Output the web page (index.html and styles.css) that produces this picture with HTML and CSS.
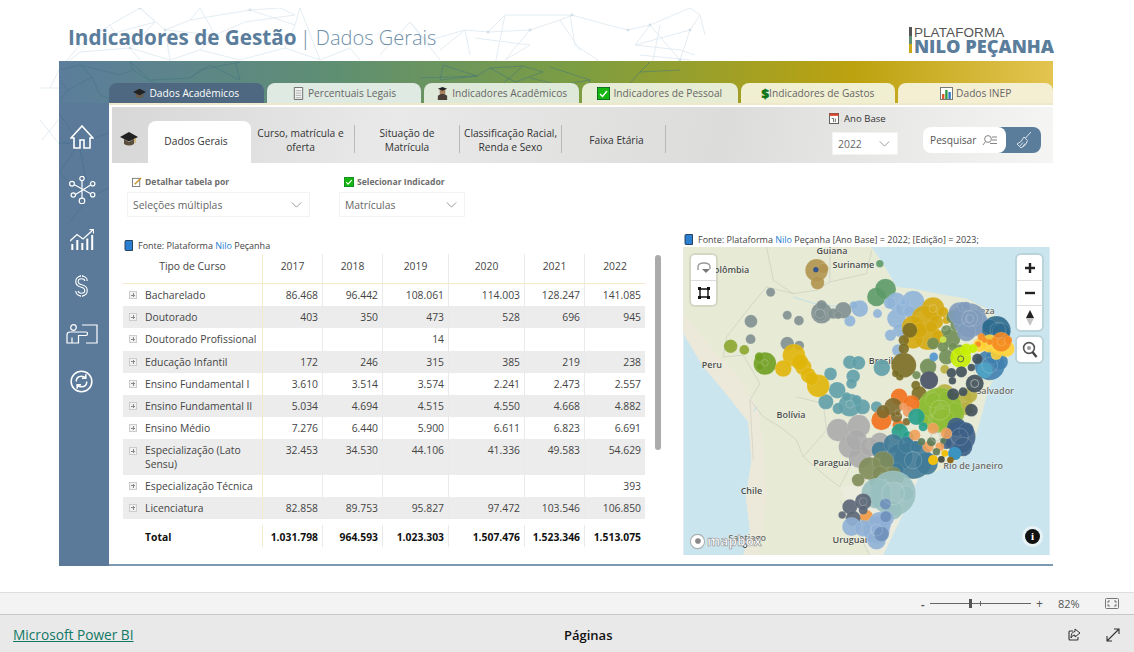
FILE: index.html
```html
<!DOCTYPE html>
<html lang="pt">
<head>
<meta charset="utf-8">
<title>Indicadores de Gestão</title>
<link rel="stylesheet" href="styles.css">
</head>
<body>
<div class="report">
  <svg class="netbg" viewBox="0 8 1134 200" width="1134" height="200">
    <path d="M110 25L140 8L155 22L115 33L110 25M140 8L165 30L190 20L200 8L215 35L165 30M190 20L250 10L280 8L295 15L245 22L215 35M250 10L295 25L300 8M80 45L60 68L80 52L130 48L170 60L200 50L240 60L285 48L320 60L350 48L360 60M130 48L140 60M60 68L50 88M40 88H60M40 120L60 145M42 140L60 118M155 22L130 48M215 35L200 50M165 30L170 60M295 25L285 48M110 25L80 45M300 8L320 60M430 40L465 30L488 32L530 30L560 20L572 15L608 25L628 30M488 32L505 15L570 15L575 45L598 60L590 75M505 15L495 65M440 50L465 30L470 55M475 38L530 45L505 60M430 45L410 22L380 55M410 22L440 60M560 20L580 50M660 25L650 75L680 60L690 30L700 15L690 8L650 25L635 45L680 50L695 55M650 25L680 60M628 30L650 25M635 45L690 30M700 15L705 35M640 55L690 60M530 30L505 60" fill="none" stroke="#e4edf3" stroke-width="1"/>
    <g fill="#d3e0e9"><circle cx="140" cy="8" r="1.4"/><circle cx="165" cy="30" r="1.4"/><circle cx="250" cy="10" r="1.4"/><circle cx="130" cy="48" r="1.4"/><circle cx="488" cy="32" r="1.4"/><circle cx="530" cy="30" r="1.4"/><circle cx="572" cy="15" r="1.4"/><circle cx="650" cy="25" r="1.4"/><circle cx="690" cy="30" r="1.4"/><circle cx="680" cy="60" r="1.4"/><circle cx="628" cy="30" r="1.4"/></g>
  </svg>
  <header class="head">
    <h1 class="title"><b>Indicadores de Gestão</b><span class="pipe">|</span><span class="sub">Dados Gerais</span></h1>
    <div class="logo">
      <div class="logobar"><i class="lb1"></i><i class="lb2"></i><i class="lb3"></i></div>
      <div class="logotext"><div class="lt1">PLATAFORMA</div><div class="lt2">NILO PEÇANHA</div></div>
    </div>
  </header>
  <main class="panel">
    <svg class="netpanel" viewBox="59 61 994 60" width="994" height="60">
      <path d="M59 80L68 90L92 77L80 65L60 70M92 77L100 95L120 103M80 65L120 75L133 70L130 61L150 80L190 78L200 70L240 62M133 70L165 90M190 78L210 65L240 80L235 61M443 65L477 76L440 80L443 65M477 76L420 78M477 76L490 68L523 66L543 72L515 82L490 68M523 66L490 95M550 67L590 80L585 103M590 80L560 85L530 78M650 62L640 72L680 70M640 72L630 83M60 100L68 90" fill="none" stroke="#41737f" stroke-opacity=".5" stroke-width="1"/>
    </svg>
    <nav class="tabs">
      <div class="tab tab1"><svg class="ic" viewBox="0 0 14 12"><path d="M3 6V9.5Q7 12 11 9.5V6L7 8Z" fill="#6b5a45"/><path d="M7 1L14 4.5L7 8L0 4.5Z" fill="#222"/></svg>Dados Acadêmicos</div>
      <div class="tab tab2"><svg class="ic" viewBox="0 0 12 14"><path d="M1.5.5H10.5V13.5H1.5Z" fill="#f4f4f4" stroke="#666"/><path d="M3 4H9M3 6.5H9M3 9H9M3 11.5H9" stroke="#aaa"/></svg>Percentuais Legais</div>
      <div class="tab tab3"><svg class="ic" viewBox="0 0 12 14"><rect x="3" y="2" width="6" height="5.5" fill="#a87e5e"/><path d="M1 2L6 0L11 2L6 4Z" fill="#222"/><path d="M1 14V9.5L4 7.5H8L11 9.5V14Z" fill="#4b4038"/></svg>Indicadores Acadêmicos</div>
      <div class="tab tab4"><svg class="ic ic-box" viewBox="0 0 13 13"><rect width="13" height="13" fill="#15b60f" stroke="#114" stroke-width=".8"/><path d="M3 7L5.5 9.5L10 4" fill="none" stroke="#fff" stroke-width="1.4"/></svg>Indicadores de Pessoal</div>
      <div class="tab tab5"><span class="dollar">$</span>Indicadores de Gastos</div>
      <div class="tab tab6"><svg class="ic ic-box" viewBox="0 0 13 13"><rect x=".5" y=".5" width="12" height="12" fill="#fff" stroke="#777"/><rect x="2" y="7" width="2.4" height="5" fill="#e2572b"/><rect x="5.2" y="3" width="2.4" height="9" fill="#2d9b44"/><rect x="8.4" y="5" width="2.4" height="7" fill="#2f78c8"/></svg>Dados INEP</div>
    </nav>
    <div class="body">
      <aside class="rail">
        <svg class="railnet" viewBox="0 0 50 120" width="50" height="120"><path d="M0 10L20 40L50 30M20 40L0 70L30 95L50 85M30 95L10 120M20 40L30 95M0 40L20 40" fill="none" stroke="#4f7392" stroke-width="1"/></svg>
        <svg class="rl rl-home" viewBox="0 0 24 24" width="24" height="24"><path d="M1 13L12 1L23 13H20V23H14V15H10V23H4V13Z"/></svg>
        <svg class="rl rl-net" viewBox="0 0 28 28" width="28" height="28"><circle cx="14" cy="2.5" r="2.2"/><circle cx="4" cy="7.7" r="2.4"/><circle cx="24.7" cy="7.7" r="2.2"/><circle cx="5.3" cy="19" r="2.2"/><circle cx="24.7" cy="18.7" r="2.2"/><circle cx="14" cy="25" r="2.8"/><path d="M14 5V22M6.4 8.7L22.7 17.7M7.5 18.5L22.6 9"/></svg>
        <svg class="rl rl-chart" viewBox="0 0 24 21" width="24" height="21"><path d="M0 12L7 5.5L13 10L23.5 .5M19.5 .5H23.5V4.5"/><path class="bar" d="M2.3 21V15M7.3 21V11M12.3 21V14M17.3 21V9.5M22.2 21V6"/></svg>
        <svg class="rl rl-dollar" viewBox="0 0 13 26" width="13" height="26"><path class="s-o" d="M6.5 2V4.5M6.5 21.5V24M11 8Q11 4.5 6.5 4.5Q2 4.5 2 8.5Q2 12 6.5 13Q11 14 11 17.5Q11 21.5 6.5 21.5Q2 21.5 2 18"/><path class="s-i" d="M6.5 2V4.5M6.5 21.5V24M11 8Q11 4.5 6.5 4.5Q2 4.5 2 8.5Q2 12 6.5 13Q11 14 11 17.5Q11 21.5 6.5 21.5Q2 21.5 2 18"/></svg>
        <svg class="rl rl-teach" viewBox="0 0 32 20" width="32" height="20"><circle cx="7.5" cy="3.5" r="2.8"/><path d="M1 19V11Q1 8 4 8H20Q21.5 8 21.5 9.5Q21.5 11.5 20 11.5H12.5V19ZM6 13.5V19M16 1H31V19H20"/></svg>
        <svg class="rl rl-cycle" viewBox="0 0 24 24" width="23" height="23"><circle cx="12" cy="12" r="10.8"/><path class="th" d="M6.5 12Q6.5 6.5 12 6.5Q14.5 6.5 16 8M16.5 4.5V8.5H12.5M17.5 12Q17.5 17.5 12 17.5Q9.5 17.5 8 16M7.5 19.5V15.5H11.5"/></svg>
      </aside>
      <section class="content">
        <div class="subbar">
          <svg class="capbig" viewBox="0 0 18 16" width="18" height="16"><path d="M4 8V13Q9 16 14 13V8L9 11Z" fill="#5c4f3e"/><path d="M9 1L18 6L9 10.5L0 6Z" fill="#222"/><path d="M15 7V12" stroke="#c79a2e"/></svg>
          <div class="st st-active">Dados Gerais</div>
          <div class="st st2">Curso, matrícula e<br>oferta</div>
          <div class="st st3">Situação de<br>Matrícula</div>
          <div class="st st4">Classificação Racial,<br>Renda e Sexo</div>
          <div class="st st5">Faixa Etária</div>
          <div class="yearbox">
            <div class="yearlabel"><svg class="ic-cal" viewBox="0 0 11 12"><rect x=".5" y=".5" width="10" height="11" fill="#fff" stroke="#555"/><rect x=".5" y=".5" width="10" height="2.6" fill="#d9452b"/><path d="M3 6H5V10M7 6V10" fill="none" stroke="#444" stroke-width=".8"/></svg>Ano Base</div>
            <div class="dd dd-year"><span>2022</span><svg class="chev" viewBox="0 0 12 7"><path d="M.5 .5L6 6L11.5 .5"/></svg></div>
          </div>
          <div class="search">
            <div class="search-l">Pesquisar<svg class="srch" viewBox="0 0 16 12" width="16" height="12"><circle cx="6" cy="5" r="3.4"/><path d="M3.5 7.5L1 11M10 3H15M10 6H15M8 9.5H15"/></svg></div>
            <div class="search-r"><svg class="broom" viewBox="0 0 16 18" width="16" height="18"><path d="M15 1L9.5 7M8 6L11.5 9.5Q11 14 5 17L1 13Q5 12 8 6ZM4 15L7 11.5M6.5 16L9 12.5"/></svg></div>
          </div>
        </div>
        <div class="filters">
          <div class="filter f1">
            <div class="flabel"><svg class="fic" viewBox="0 0 11 11"><rect x=".5" y="1.5" width="8" height="9" fill="#fff" stroke="#777"/><path d="M3 8L10 1" stroke="#c9962c" stroke-width="1.6"/></svg>Detalhar tabela por</div>
            <div class="dd dd-a"><span>Seleções múltiplas</span><svg class="chev" viewBox="0 0 12 7"><path d="M.5 .5L6 6L11.5 .5"/></svg></div>
          </div>
          <div class="filter f2">
            <div class="flabel"><svg class="fic" viewBox="0 0 11 11"><rect width="11" height="11" fill="#15b60f" stroke="#145" stroke-width=".6"/><path d="M2.5 5.5L4.5 7.8L8.5 3.5" fill="none" stroke="#fff" stroke-width="1.2"/></svg>Selecionar Indicador</div>
            <div class="dd dd-b"><span>Matrículas</span><svg class="chev" viewBox="0 0 12 7"><path d="M.5 .5L6 6L11.5 .5"/></svg></div>
          </div>
        </div>
        <div class="data">
          <div class="left">
            <div class="cap cap-l"><svg class="book" viewBox="0 0 9 11"><path d="M1 1.5Q1 .5 2 .5H8.5V10.5H2Q1 10.5 1 9.5Z" fill="#2b7fd0" stroke="#1d3550" stroke-width=".9"/></svg><span>Fonte: Plataforma <span class="nilo">Nilo</span> Peçanha</span></div>
            <div class="tablewrap">
              <div class="tbl">
                <div class="r rh"><div class="c c0 hc">Tipo de Curso</div><div class="c hc">2017</div><div class="c hc">2018</div><div class="c hc">2019</div><div class="c hc">2020</div><div class="c hc">2021</div><div class="c hc">2022</div></div>
                <div class="r"><div class="c c0"><i class="px"></i>Bacharelado</div><div class="c">86.468</div><div class="c">96.442</div><div class="c">108.061</div><div class="c">114.003</div><div class="c">128.247</div><div class="c">141.085</div></div>
                <div class="r z"><div class="c c0"><i class="px"></i>Doutorado</div><div class="c">403</div><div class="c">350</div><div class="c">473</div><div class="c">528</div><div class="c">696</div><div class="c">945</div></div>
                <div class="r"><div class="c c0"><i class="px"></i>Doutorado Profissional</div><div class="c"></div><div class="c"></div><div class="c">14</div><div class="c"></div><div class="c"></div><div class="c"></div></div>
                <div class="r z"><div class="c c0"><i class="px"></i>Educação Infantil</div><div class="c">172</div><div class="c">246</div><div class="c">315</div><div class="c">385</div><div class="c">219</div><div class="c">238</div></div>
                <div class="r"><div class="c c0"><i class="px"></i>Ensino Fundamental I</div><div class="c">3.610</div><div class="c">3.514</div><div class="c">3.574</div><div class="c">2.241</div><div class="c">2.473</div><div class="c">2.557</div></div>
                <div class="r z"><div class="c c0"><i class="px"></i>Ensino Fundamental II</div><div class="c">5.034</div><div class="c">4.694</div><div class="c">4.515</div><div class="c">4.550</div><div class="c">4.668</div><div class="c">4.882</div></div>
                <div class="r"><div class="c c0"><i class="px"></i>Ensino Médio</div><div class="c">7.276</div><div class="c">6.440</div><div class="c">5.900</div><div class="c">6.611</div><div class="c">6.823</div><div class="c">6.691</div></div>
                <div class="r z rtall"><div class="c c0"><i class="px"></i><span>Especialização (Lato<br>Sensu)</span></div><div class="c">32.453</div><div class="c">34.530</div><div class="c">44.106</div><div class="c">41.336</div><div class="c">49.583</div><div class="c">54.629</div></div>
                <div class="r"><div class="c c0"><i class="px"></i>Especialização Técnica</div><div class="c"></div><div class="c"></div><div class="c"></div><div class="c"></div><div class="c"></div><div class="c">393</div></div>
                <div class="r z"><div class="c c0"><i class="px"></i>Licenciatura</div><div class="c">82.858</div><div class="c">89.753</div><div class="c">95.827</div><div class="c">97.472</div><div class="c">103.546</div><div class="c">106.850</div></div>
                <div class="r rt"><div class="c c0 tot">Total</div><div class="c">1.031.798</div><div class="c">964.593</div><div class="c">1.023.303</div><div class="c">1.507.476</div><div class="c">1.523.346</div><div class="c">1.513.075</div></div>
              </div>
              <div class="scroll"></div>
            </div>
          </div>
          <div class="right">
            <div class="cap cap-r"><svg class="book" viewBox="0 0 9 11"><path d="M1 1.5Q1 .5 2 .5H8.5V10.5H2Q1 10.5 1 9.5Z" fill="#2b7fd0" stroke="#1d3550" stroke-width=".9"/></svg><span>Fonte: Plataforma <span class="nilo">Nilo</span> Peçanha [Ano Base] = 2022; [Edição] = 2023;</span></div>
            <div class="map">
              <svg class="mapsvg" viewBox="10 50 1100 925" width="367" height="308">
                <rect x="10" y="50" width="1100" height="925" fill="#cbe5ee"/>
                <path class="land" d="M10 50H575L610 100L650 170L700 175L770 190L860 205L930 240L990 300L995 370L950 430L925 480L905 560L885 630L850 680L790 715L715 745L695 790L680 830L640 900L610 945L570 975H190L210 900L198 800L215 690L205 575L130 480L70 410L10 310Z"/>
                <path class="andes" d="M10 310L70 410L130 480L205 575L215 690L198 800L210 900L190 975H235L260 800L250 650L235 540L170 430L100 360L50 300L10 250Z"/>
                <path class="south" d="M480 770L570 975H610L680 830L715 745L600 760Z"/>
                <path class="border" d="M260 50L280 150L340 190L260 170L210 230L140 320L130 380L190 375L240 460L210 510L250 560L300 590L350 630L370 680L440 740L480 770M440 600L430 520L350 500M370 680L440 600M480 770L520 690M520 880L570 975M480 810L520 880M210 510L220 690M340 190L410 180L450 155L560 130L575 60M450 60L450 155"/>
                <path class="river" d="M340 200L420 225L520 230M230 530L220 545"/>
                <g class="mlab"><text x="208" y="128" class="e">Colômbia</text><text x="410" y="70">Guiana</text><text x="458" y="112">Suriname</text><text x="65" y="413">Peru</text><text x="567" y="400">Brasil</text><text x="290" y="563">Bolívia</text><text x="400" y="708">Paraguai</text><text x="182" y="792">Chile</text><text x="458" y="940">Uruguai</text><text x="970" y="717" class="lt e">Rio de Janeiro</text><text x="1003" y="492" class="lt e">Salvador</text><text x="945" y="250" class="lt e">Fortaleza</text><text x="145" y="932" class="lt">Santiago</text></g>
                <circle cx="195" cy="947" r="6" fill="none" stroke="#333" stroke-width="2.5"/>
                <g class="dot" fill="#b0954f"><circle cx="410" cy="120" r="30"/><circle cx="413" cy="157" r="18"/><circle cx="430" cy="115" r="14"/></g>
                <circle cx="408" cy="118" r="8" fill="#35558c"/>
                <g class="dot" fill="#5c9a68"><circle cx="590" cy="200" r="25"/><circle cx="617" cy="177" r="28"/><circle cx="600" cy="100" r="10"/></g>
                <g class="dot" fill="#8fb4d8"><circle cx="700" cy="215" r="30"/><circle cx="650" cy="215" r="25"/><circle cx="630" cy="218" r="16"/><circle cx="650" cy="265" r="25"/><circle cx="660" cy="300" r="18"/><circle cx="632" cy="315" r="15"/><circle cx="655" cy="360" r="16"/><circle cx="540" cy="235" r="22"/><circle cx="522" cy="225" r="11"/><circle cx="510" cy="272" r="15"/><circle cx="593" cy="250" r="12"/><circle cx="670" cy="235" r="20"/><circle cx="690" cy="245" r="16"/><circle cx="672" cy="215" r="14"/></g>
                <g class="dot" fill="#7f9090"><circle cx="425" cy="248" r="28"/><circle cx="490" cy="240" r="22"/><circle cx="460" cy="250" r="14"/><circle cx="475" cy="255" r="10"/><circle cx="425" cy="225" r="14"/><circle cx="213" cy="273" r="17"/><circle cx="272" cy="186" r="12"/><circle cx="322" cy="255" r="12"/><circle cx="357" cy="271" r="13"/><circle cx="212" cy="327" r="13"/><circle cx="322" cy="340" r="18"/><circle cx="358" cy="346" r="13"/><circle cx="420" cy="255" r="16"/></g>
                <g class="dot" fill="#d4a90f"><circle cx="760" cy="235" r="30"/><circle cx="735" cy="265" r="35"/><circle cx="700" cy="290" r="30"/><circle cx="745" cy="320" r="35"/><circle cx="700" cy="325" r="27"/><circle cx="790" cy="245" r="14"/><circle cx="775" cy="320" r="18"/><circle cx="770" cy="275" r="18"/><circle cx="720" cy="300" r="20"/><circle cx="755" cy="290" r="16"/><circle cx="800" cy="270" r="10"/></g>
                <g class="dot" fill="#6f8d55"><circle cx="820" cy="260" r="18"/><circle cx="815" cy="325" r="24"/><circle cx="800" cy="380" r="20"/><circle cx="745" cy="410" r="22"/><circle cx="710" cy="435" r="11"/><circle cx="840" cy="360" r="15"/><circle cx="760" cy="340" r="16"/><circle cx="800" cy="300" r="14"/><circle cx="830" cy="285" r="16"/><circle cx="790" cy="350" r="14"/><circle cx="820" cy="350" r="12"/></g>
                <g class="dot" fill="#7f9bbb"><circle cx="870" cy="270" r="45"/><circle cx="840" cy="250" r="30"/><circle cx="890" cy="280" r="32"/><circle cx="860" cy="305" r="25"/><circle cx="885" cy="262" r="22"/><circle cx="850" cy="230" r="14"/><circle cx="860" cy="228" r="12"/></g>
                <g class="dot" fill="#2e6a8e"><circle cx="950" cy="300" r="38"/><circle cx="930" cy="290" r="20"/><circle cx="965" cy="305" r="24"/></g>
                <g class="dot" fill="#3f7fae"><circle cx="930" cy="405" r="40"/><circle cx="960" cy="395" r="22"/><circle cx="940" cy="380" r="20"/></g>
                <circle cx="915" cy="420" r="24" fill="#4ea3c4" fill-opacity=".9"/>
                <g class="dot" fill="#ffd233"><circle cx="930" cy="340" r="24"/><circle cx="980" cy="355" r="22"/><circle cx="900" cy="345" r="18"/><circle cx="950" cy="372" r="15"/><circle cx="960" cy="350" r="20"/></g>
                <g class="dot" fill="#f58a1f"><circle cx="965" cy="335" r="26"/><circle cx="905" cy="320" r="10"/><circle cx="985" cy="330" r="11"/><circle cx="895" cy="342" r="8"/><circle cx="930" cy="335" r="8"/><circle cx="915" cy="330" r="7"/></g>
                <g class="dot" fill="#c6ee00"><circle cx="843" cy="382" r="28"/><circle cx="860" cy="358" r="16"/><circle cx="880" cy="355" r="12"/></g>
                <circle cx="790" cy="328" r="10" fill="#c8e050"/><circle cx="843" cy="386" r="9" fill="none" stroke="#56664a" stroke-width="3"/><circle cx="762" cy="380" r="13" fill="#5d9dd0"/>
                <g class="dot" fill="#7a6d24"><circle cx="672" cy="405" r="33"/><circle cx="672" cy="330" r="14"/><circle cx="690" cy="300" r="20"/><circle cx="660" cy="440" r="10"/><circle cx="672" cy="355" r="14"/><circle cx="708" cy="465" r="12"/><circle cx="718" cy="490" r="20"/><circle cx="648" cy="430" r="10"/></g>
                <g class="dot" fill="#5fa0a8"><circle cx="510" cy="396" r="18"/><circle cx="536" cy="398" r="18"/><circle cx="606" cy="413" r="22"/><circle cx="452" cy="431" r="17"/><circle cx="520" cy="438" r="18"/><circle cx="515" cy="460" r="14"/><circle cx="472" cy="480" r="22"/><circle cx="438" cy="515" r="20"/><circle cx="510" cy="525" r="30"/><circle cx="548" cy="530" r="20"/><circle cx="590" cy="530" r="15"/><circle cx="475" cy="535" r="15"/><circle cx="500" cy="500" r="12"/><circle cx="530" cy="510" r="14"/></g>
                <g class="dot" fill="#8ba62e"><circle cx="152" cy="348" r="18"/><circle cx="193" cy="359" r="13"/></g>
                <g class="dot" fill="#6f9e20"><circle cx="255" cy="400" r="30"/><circle cx="238" cy="380" r="12"/><circle cx="240" cy="410" r="10"/></g>
                <g class="dot" fill="#e0b50a"><circle cx="342" cy="375" r="30"/><circle cx="310" cy="415" r="22"/><circle cx="370" cy="410" r="22"/><circle cx="385" cy="435" r="20"/><circle cx="360" cy="395" r="22"/><circle cx="415" cy="467" r="30"/><circle cx="395" cy="445" r="18"/></g>
                <circle cx="748" cy="450" r="27" fill="#555f6f"/>
                <g class="dot" fill="#b8b040"><circle cx="795" cy="417" r="12"/><circle cx="795" cy="490" r="25"/><circle cx="850" cy="510" r="25"/><circle cx="830" cy="520" r="15"/><circle cx="870" cy="495" r="20"/><circle cx="860" cy="535" r="18"/></g>
                <g class="dot" fill="#8ebc35"><circle cx="780" cy="540" r="60"/><circle cx="740" cy="530" r="25"/><circle cx="820" cy="550" r="30"/><circle cx="760" cy="510" r="20"/><circle cx="800" cy="505" r="20"/><circle cx="730" cy="570" r="15"/><circle cx="790" cy="570" r="30"/></g>
                <g class="dot" fill="#3f4f5a"><circle cx="893" cy="386" r="14"/><circle cx="815" cy="428" r="13"/><circle cx="845" cy="425" r="15"/><circle cx="875" cy="412" r="10"/><circle cx="818" cy="452" r="10"/><circle cx="820" cy="492" r="16"/><circle cx="875" cy="540" r="17"/><circle cx="850" cy="485" r="12"/><circle cx="885" cy="460" r="24"/></g>
                <circle cx="885" cy="460" r="12" fill="none" stroke="#ccc" stroke-width="2"/>
                <g class="dot" fill="#f2701c"><circle cx="658" cy="500" r="22"/><circle cx="605" cy="570" r="27"/><circle cx="695" cy="520" r="22"/><circle cx="655" cy="585" r="15"/></g>
                <g class="dot" fill="#7f6a2c"><circle cx="640" cy="530" r="24"/><circle cx="610" cy="545" r="18"/><circle cx="650" cy="560" r="15"/><circle cx="680" cy="575" r="10"/></g>
                <g class="dot" fill="#f09a60"><circle cx="685" cy="545" r="14"/><circle cx="670" cy="530" r="10"/></g>
                <g class="dot" fill="#23a08c"><circle cx="710" cy="560" r="22"/><circle cx="660" cy="605" r="22"/><circle cx="685" cy="620" r="15"/><circle cx="730" cy="590" r="12"/></g>
                <g class="dot" fill="#3d5f86"><circle cx="840" cy="620" r="42"/><circle cx="830" cy="590" r="25"/><circle cx="850" cy="650" r="25"/><circle cx="800" cy="640" r="15"/><circle cx="860" cy="600" r="20"/></g>
                <g class="dot" fill="#ababab"><circle cx="475" cy="600" r="30"/><circle cx="537" cy="588" r="30"/><circle cx="510" cy="650" r="30"/><circle cx="540" cy="680" r="30"/><circle cx="600" cy="635" r="25"/><circle cx="530" cy="630" r="28"/><circle cx="570" cy="650" r="25"/></g>
                <g class="dot" fill="#3f7a97"><circle cx="600" cy="660" r="22"/><circle cx="640" cy="640" r="25"/><circle cx="700" cy="690" r="50"/><circle cx="740" cy="700" r="30"/><circle cx="660" cy="680" r="35"/><circle cx="650" cy="720" r="20"/><circle cx="620" cy="690" r="18"/><circle cx="680" cy="645" r="22"/><circle cx="710" cy="650" r="16"/></g>
                <circle cx="825" cy="670" r="20" fill="#3b93c0"/>
                <g class="dot" fill="#f0a05a"><circle cx="705" cy="615" r="15"/><circle cx="760" cy="595" r="15"/><circle cx="800" cy="610" r="15"/><circle cx="745" cy="650" r="15"/><circle cx="780" cy="650" r="12"/></g>
                <g class="dot" fill="#5c7a55"><circle cx="725" cy="635" r="10"/><circle cx="755" cy="635" r="12"/><circle cx="790" cy="632" r="8"/><circle cx="770" cy="665" r="10"/></g>
                <circle cx="760" cy="690" r="15" fill="#f0c010"/><circle cx="795" cy="670" r="10" fill="#f0c010"/><circle cx="812" cy="690" r="10" fill="#8c6a1e"/><circle cx="785" cy="688" r="10" fill="#4d5346"/><circle cx="768" cy="620" r="14" fill="none" stroke="#bbb" stroke-width="2"/>
                <g class="dot" fill="#7f8c5a"><circle cx="570" cy="715" r="30"/><circle cx="610" cy="695" r="28"/><circle cx="640" cy="735" r="22"/><circle cx="535" cy="750" r="17"/><circle cx="585" cy="755" r="15"/><circle cx="660" cy="745" r="12"/><circle cx="600" cy="730" r="20"/></g>
                <g class="dot" fill="#98c0c0"><circle cx="640" cy="790" r="60"/><circle cx="590" cy="790" r="40"/><circle cx="680" cy="790" r="20"/><circle cx="640" cy="840" r="25"/></g>
                <circle cx="560" cy="860" r="20" fill="#f0a050"/>
                <g class="dot" fill="#5a6575"><circle cx="510" cy="830" r="20"/><circle cx="550" cy="815" r="22"/><circle cx="520" cy="865" r="20"/><circle cx="487" cy="855" r="10"/><circle cx="550" cy="840" r="12"/></g>
                <g class="dot" fill="#8fb0d5"><circle cx="590" cy="900" r="35"/><circle cx="515" cy="890" r="25"/><circle cx="620" cy="865" r="20"/><circle cx="590" cy="930" r="25"/><circle cx="600" cy="880" r="30"/><circle cx="550" cy="895" r="22"/></g>
                <g class="dot" fill="#6e90ba"><circle cx="618" cy="860" r="15"/><circle cx="617" cy="822" r="15"/><circle cx="605" cy="912" r="20"/></g>
                <g class="ring"><circle cx="760" cy="235" r="12"/><circle cx="870" cy="265" r="24"/><circle cx="870" cy="265" r="12"/><circle cx="670" cy="215" r="10"/><circle cx="955" cy="300" r="24"/><circle cx="965" cy="335" r="12"/><circle cx="930" cy="405" r="24"/><circle cx="510" cy="522" r="12"/><circle cx="255" cy="398" r="10"/><circle cx="655" cy="548" r="10"/><circle cx="840" cy="620" r="26"/><circle cx="700" cy="690" r="26"/><circle cx="640" cy="790" r="34"/><circle cx="420" cy="250" r="14"/><circle cx="780" cy="540" r="30"/><circle cx="550" cy="815" r="12"/><circle cx="590" cy="900" r="18"/><circle cx="795" cy="293" r="8"/></g>
              </svg>
              <div class="mgroup mg-l">
                <div class="mbtn"><svg viewBox="0 0 14 14" width="14" height="14"><path d="M1 9V6Q1 2 7 2Q13 2 13 6V8" fill="none" stroke="#999" stroke-width="1.4"/><path d="M5 8H13L9 12Z" fill="#777"/></svg></div>
                <div class="mbtn"><svg viewBox="0 0 12 12" width="12" height="12"><path d="M2 2H10V10H2Z" fill="none" stroke="#111" stroke-width="1.4"/><path d="M0 0H3V3H0ZM9 0H12V3H9ZM0 9H3V12H0ZM9 9H12V12H9Z" fill="#111"/></svg></div>
              </div>
              <div class="mgroup mg-r">
                <div class="mbtn"><svg viewBox="0 0 12 12" width="12" height="12"><path d="M6 1V11M1 6H11" stroke="#222" stroke-width="2.4"/></svg></div>
                <div class="mbtn"><svg viewBox="0 0 12 12" width="12" height="12"><path d="M1 6H11" stroke="#222" stroke-width="2.4"/></svg></div>
                <div class="mbtn"><svg viewBox="0 0 10 18" width="10" height="18"><path d="M5 1L9 9H1Z" fill="#222"/><path d="M5 17L9 9H1Z" fill="#c4c4c4"/></svg></div>
              </div>
              <div class="mgroup mg-s"><div class="mbtn"><svg viewBox="0 0 16 18" width="16" height="18"><circle cx="7" cy="7" r="5.4" fill="#fff" stroke="#555" stroke-width="1.6"/><circle cx="7" cy="7" r="2" fill="#999"/><path d="M10.5 11L14.5 16" stroke="#444" stroke-width="2.4"/></svg></div></div>
              <div class="mlogo"><svg viewBox="0 0 18 18" width="17" height="17"><circle cx="9" cy="9" r="7.5" fill="#fff" stroke="#888" stroke-width="1.2" stroke-opacity=".6"/><circle cx="9.5" cy="8.5" r="3" fill="#888"/></svg><span>mapbox</span></div>
              <div class="minfo">i</div>
            </div>
          </div>
        </div>
      </section>
    </div>
  </main>
</div>
<div class="zoombar">
  <span class="zm">-</span>
  <div class="slider"><i class="tick"></i><i class="thumb"></i></div>
  <span class="zp">+</span>
  <span class="zpct">82%</span>
  <svg class="fit" viewBox="0 0 14 11" width="14" height="11"><rect x=".5" y=".5" width="13" height="10" rx="1" fill="none" stroke="#777"/><path d="M3 5V3H5M9 3H11V5M11 6V8H9M5 8H3V6" fill="none" stroke="#555" stroke-width=".8"/></svg>
</div>
<footer class="foot">
  <a class="pbi" href="#">Microsoft Power BI</a>
  <span class="pages">Páginas</span>
  <div class="fact">
    <svg viewBox="0 0 14 14" width="14" height="14"><path d="M6 3H3Q2 3 2 4V11Q2 12 3 12H10Q11 12 11 11V9" fill="none" stroke="#333" stroke-width="1.1"/><path d="M8 1L13 5L8 9V7Q5 7 4 10Q4 4 8 3.5Z" fill="none" stroke="#333"/></svg>
    <svg viewBox="0 0 14 14" width="14" height="14"><path d="M1 13L13 1M8 1H13V6M1 8V13H6" fill="none" stroke="#333" stroke-width="1.1"/></svg>
  </div>
</footer>
</body>
</html>
```

FILE: styles.css
```css
* { box-sizing: border-box; }
html, body { margin: 0; padding: 0; }
body { width: 1134px; height: 652px; overflow: hidden; background: #fff; font-family: "Open Sans", "Noto Sans", sans-serif; color: #333; }

.report { position: relative; height: 592px; overflow: hidden; background: #fff; }
.netbg { position: absolute; left: 0; top: 8px; }

.head { position: relative; display: flex; justify-content: space-between; height: 61px; padding: 21px 80px 0 68px; }
.title { margin: 0; font-size: 20.7px; line-height: 32px; font-weight: 400; color: #5b7d9c; white-space: nowrap; }
.title b { font-weight: 700; }
.pipe { margin: 0 5px 0 3px; font-weight: 300; color: #6a8aa6; }
.sub { font-size: 20px; font-weight: 300; color: #6f8fa9; }
.logo { display: flex; gap: 2px; padding-top: 5px; }
.logobar { display: flex; flex-direction: column; width: 3px; height: 26px; margin-top: 1px; }
.logobar i { flex: 1; }
.lb1 { background: #555; }
.lb2 { background: #5d8f72; }
.lb3 { background: #cda815; }
.logotext { white-space: nowrap; }
.lt1 { font-size: 13.5px; line-height: 13px; color: #555; letter-spacing: .1px; font-family: "Liberation Sans", sans-serif; }
.lt2 { font-size: 18.2px; line-height: 14px; font-weight: 800; color: #5b7d9c; }

.panel { position: relative; width: 994px; height: 505px; margin-left: 59px; padding-top: 22px; background: linear-gradient(90deg, #5b7d9c 0%, #5f8f72 28%, #7c9d42 52%, #bca20f 80%, #e3c450 100%); display: flex; flex-direction: column; }
.netpanel { position: absolute; left: 0; top: 0; }
.tabs { position: relative; display: flex; gap: 3px; margin-left: 50px; height: 20px; }
.tab { width: 155px; height: 20px; display: flex; align-items: center; justify-content: center; gap: 3px; border-radius: 8px 8px 0 0; font-size: 10.2px; color: #666; white-space: nowrap; }
.tab1 { background: #4d6880; color: #fff; }
.tab2 { background: #dfeae2; }
.tab3 { background: #dfe9da; }
.tab4 { background: #e6edd4; width: 156px; }
.tab5 { background: #f0efd2; }
.tab6 { background: #f4eed2; }
.ic { width: 13px; height: 13px; }
.ic-box { width: 13px; height: 13px; }
.dollar { color: #0c7a0c; font-weight: 800; font-size: 13px; line-height: 1; -webkit-text-stroke: .4px #062; margin-right: -3px; }

.body { position: relative; flex: 1; display: flex; min-height: 0; }
.rail { position: relative; width: 50px; background: #5b7a9a; display: flex; flex-direction: column; align-items: center; padding: 22px 5px 0 0; }
.railnet { position: absolute; left: 0; top: 0; }
.rl { position: relative; fill: none; stroke: #fff; stroke-width: 1.4; flex: none; }
.rl-home { stroke-width: 1.6; }
.rl-net { margin-top: 27px; stroke-width: 1.2; }
.rl-chart { margin-top: 25px; stroke-width: 1.3; }
.rl-chart .bar { stroke-width: 2; }
.rl-dollar { margin-top: 23px; }
.s-o { stroke: #fff; stroke-width: 3.6; }
.s-i { stroke: #5b7a9a; stroke-width: 1.4; }
.rl-teach { margin-top: 25px; stroke-width: 1.2; }
.rl-cycle { margin-top: 26px; stroke-width: 1.6; }
.rl-cycle .th { stroke-width: 1.6; }
.content { flex: 1; background: #fff; border-top: 2px solid #eee9c9; border-bottom: 2px solid #7e9ab2; display: flex; flex-direction: column; padding-top: 2px; min-width: 0; }

.subbar { display: flex; align-items: flex-end; height: 56px; margin-left: 3px; background: linear-gradient(100deg, #d6d7d6 0%, #e8e9e8 30%, #dcdddb 65%, #f5f5f4 100%); font-size: 10.2px; color: #333; }
.capbig { align-self: center; margin: 8px 10px 0 8px; flex: none; }
.st { height: 28px; display: flex; align-items: center; justify-content: center; text-align: center; line-height: 14px; padding-top: 1px; border-right: 1px solid #b9b9b9; margin-bottom: 10px; flex: none; white-space: nowrap; }
.st-active { width: 103px; height: 42px; margin-bottom: 0; padding: 0 7px 2px 0; background: #fff; border: 0; border-radius: 8px 8px 0 0; }
.st2 { width: 104px; padding-right: 4px; }
.st3 { width: 105px; }
.st4 { width: 102px; }
.st5 { width: 104px; padding: 2px 0 0 6px; }
.yearbox { width: 68px; margin-left: 163px; align-self: flex-start; padding-top: 5px; flex: none; }
.yearlabel { display: flex; align-items: center; gap: 5px; font-size: 9.6px; height: 12px; white-space: nowrap; }
.ic-cal { width: 10px; height: 11px; flex: none; }
.yearbox .dd { margin-top: 9px; margin-left: 4px; }
.dd { display: flex; align-items: center; justify-content: space-between; background: #fff; height: 23px; padding: 1px 5px; font-size: 10.4px; color: #666; box-shadow: 0 0 0 1px #f3f3f3; }
.dd-year { width: 64px; height: 21px; }
.chev { width: 11px; height: 6px; fill: none; stroke: #8a8a8a; stroke-width: 1; flex: none; margin-right: 2px; }
.search { display: flex; width: 118px; height: 26px; margin-left: 26px; align-self: flex-start; margin-top: 20px; flex: none; }
.search-l { position: relative; width: 83px; flex: none; background: #fff; border-radius: 8px; display: flex; align-items: center; gap: 6px; padding-left: 7px; font-size: 10.2px; color: #555; }
.srch { fill: none; stroke: #777; stroke-width: .9; flex: none; }
.search-r { flex: 1; margin-left: -8px; padding-left: 8px; display: flex; align-items: center; justify-content: center; background: #5b7d9c; border-radius: 0 8px 8px 0; }
.broom { fill: none; stroke: #d9e2ea; stroke-width: 1; }

.filters { position: relative; display: flex; height: 69px; padding: 13px 0 0 19px; flex: none; }
.filter { display: flex; flex-direction: column; gap: 5px; flex: none; }
.f1 { width: 212px; }
.f2 { width: 124px; }
.flabel { display: flex; align-items: center; gap: 3px; height: 12px; padding-left: 4px; font-size: 8.6px; font-weight: 700; color: #6d6d6d; white-space: nowrap; }
.fic { width: 10px; height: 10px; flex: none; }
.dd-a { width: 181px; }
.dd-b { width: 124px; }

.data { display: flex; flex: 1; min-height: 0; }
.left { width: 574px; padding-left: 14px; flex: none; }
.right { width: 367px; flex: none; }
.cap { display: flex; align-items: center; gap: 5px; font-size: 9px; color: #444; white-space: nowrap; }
.cap-l { height: 22px; padding: 5px 0 0 1px; }
.cap-r { height: 15px; padding: 0 0 1px 1px; }
.book { width: 9px; height: 11px; flex: none; }
.nilo { color: #2b7fd0; }

.tablewrap { display: flex; gap: 10px; }
.tbl { width: 522px; flex: none; font-size: 10.35px; color: #444; }
.r { display: grid; grid-template-columns: 140px 60px 60px 66px 76px 60px 60px; height: 22.2px; }
.rh { height: 30px; border-bottom: 1px solid #f3ebc9; }
.z { background: #ececec; }
.rtall { height: 35.4px; }
.rt { height: 22px; margin-top: 6px; font-weight: 700; color: #111; }
.rt .c { padding-top: 1px; }
.c { display: flex; align-items: center; justify-content: flex-end; padding-right: 4px; border-right: 1px solid #eaeaea; white-space: nowrap; min-width: 0; }
.c:last-child { border-right: 0; }
.c0 { justify-content: flex-start; padding: 0 0 0 6px; gap: 8px; border-right: 1px solid #f3ebc9; }
.hc { justify-content: center; padding: 0 0 6px; color: #444; }
.tot { padding-left: 22px; }
.rtall .c { align-items: flex-start; padding-top: 4px; line-height: 14px; }
.rtall .px { margin-top: 4px; }
.px { position: relative; width: 8px; height: 8px; flex: none; border: 1px solid #ccc; background: linear-gradient(#888, #888) center / 4px 1px no-repeat, linear-gradient(#888, #888) center / 1px 4px no-repeat, #f2f2f2; }
.scroll { width: 6px; height: 195px; margin-top: 1px; border-radius: 3px; background: #ababab; flex: none; }

.map { position: relative; width: 367px; height: 308px; overflow: hidden; }
.mapsvg { display: block; }
.land { fill: #e7ead4; }
.andes { fill: #ece9da; }
.south { fill: #ebecdd; }
.border { fill: none; stroke: #b9bdb6; stroke-width: 1.3; }
.river { fill: none; stroke: #c0dfea; stroke-width: 3; }
.dot { fill-opacity: .9; stroke: #fff; stroke-opacity: .2; stroke-width: 1.5; }
.dot circle { transform-box: fill-box; transform-origin: center; transform: scale(1.13); }
.ring { fill: none; stroke: #fff; stroke-opacity: .28; stroke-width: 2; }
.mlab text { font: 600 27px "Open Sans", sans-serif; fill: #4b4f4b; stroke: #fff; stroke-width: 3; stroke-opacity: .5; paint-order: stroke; }
.mlab .lt { fill: #6a6d68; }
.mlab .e { text-anchor: end; }
.mgroup { position: absolute; background: #fff; border-radius: 4px; box-shadow: 0 0 0 2px rgba(0,0,0,.08); display: flex; flex-direction: column; }
.mbtn { width: 25px; height: 25px; display: flex; align-items: center; justify-content: center; border-top: 1px solid #ddd; }
.mbtn:first-child { border-top: 0; }
.mg-l { left: 8px; top: 8px; }
.mg-r { left: 334px; top: 8px; }
.mg-s { left: 334px; top: 90px; }
.mlogo { position: absolute; left: 6px; top: 285px; display: flex; align-items: center; gap: 1px; font: 700 13.5px "Open Sans", sans-serif; color: #fff; -webkit-text-stroke: .6px #8a8a8a; }
.minfo { position: absolute; left: 342px; top: 282px; width: 15px; height: 15px; border-radius: 50%; background: #111; box-shadow: 0 0 0 3px rgba(255,255,255,.55); color: #fff; font: 700 11px/15px "Liberation Serif", serif; text-align: center; }

.zoombar { display: flex; align-items: center; height: 23px; background: #f3f3f3; border-top: 1px solid #dedede; border-bottom: 1px solid #c8c8c8; padding-left: 921px; font-size: 11px; color: #555; }
.zm { width: 7px; font-weight: 700; }
.slider { position: relative; width: 101px; height: 1px; background: #666; margin-left: 2px; }
.tick { position: absolute; left: 50px; top: -2px; width: 1px; height: 5px; background: #666; }
.thumb { position: absolute; left: 39px; top: -4px; width: 3px; height: 9px; background: #555; }
.zp { margin-left: 5px; width: 22px; font-size: 12px; }
.zpct { width: 47px; }
.fit { flex: none; }

.foot { position: relative; display: flex; align-items: center; height: 37px; padding-top: 2px; background: #e9e9e9; padding-left: 13px; font-size: 13.7px; }
.pbi { color: #117865; text-decoration: underline; }
.pages { position: absolute; left: 564px; font-weight: 600; color: #111; font-size: 13px; }
.fact { position: absolute; left: 1067px; display: flex; gap: 25px; }
```
